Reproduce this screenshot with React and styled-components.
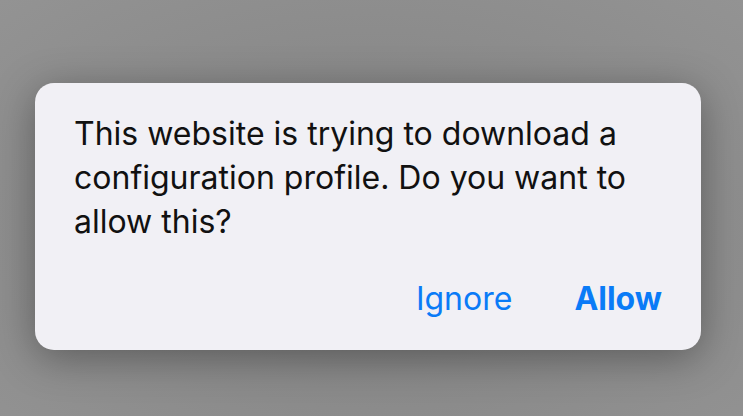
import React from 'react';
import styled, { createGlobalStyle } from "styled-components"

const GlobalStyle = createGlobalStyle`
  html, body {
    margin: 0;
    padding: 0;
    background: #8f8f8f;
  }
`

const Backdrop = styled.div`
  width: 743px;
  height: 416px;
  box-sizing: border-box;
  padding: 83px 0 0 35px;
  background: radial-gradient(ellipse at 50% 55%, #7b7b7b 0%, #898989 45%, #939393 100%);
  overflow: hidden;
  font-family: Inter, "Noto Sans", sans-serif;
`

const AlertCard = styled.div`
  width: 666px;
  height: 267px;
  box-sizing: border-box;
  background: #f1f0f5;
  border-radius: 19px;
  box-shadow: 0 8px 40px rgba(0, 0, 0, 0.34);
  padding: 29px 39px 0 39px;
  display: flex;
  flex-direction: column;
`

const Message = styled.p`
  margin: 0;
  font-size: 32px;
  line-height: 44px;
  color: #111111;
`

const Actions = styled.div`
  display: flex;
  justify-content: flex-end;
  align-items: center;
  gap: 62px;
  margin-top: 35px;
`

const ActionButton = styled.button`
  border: none;
  background: none;
  padding: 0;
  font-family: inherit;
  font-size: 32px;
  line-height: 40px;
  color: #0a7bf7;
  font-weight: ${props => (props.$primary ? 700 : 400)};
  cursor: pointer;
`

const App = () => {
    return (
        <Backdrop>
            <GlobalStyle/>
            <AlertCard>
                <Message>
                    This website is trying to download a configuration profile. Do you want to allow this?
                </Message>
                <Actions>
                    <ActionButton>Ignore</ActionButton>
                    <ActionButton $primary>Allow</ActionButton>
                </Actions>
            </AlertCard>
        </Backdrop>
    );
};

export default App;
